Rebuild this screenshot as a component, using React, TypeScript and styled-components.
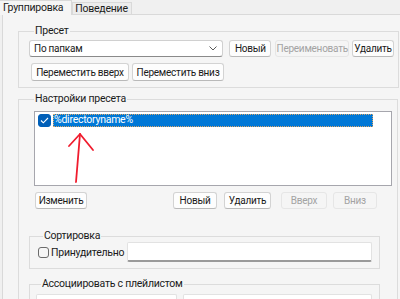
import React from "react";
import styled, { createGlobalStyle } from "styled-components";

const Global = createGlobalStyle`
  html, body {
    margin: 0;
    padding: 0;
    background: #f0f0f0;
  }
  body {
    font-family: Roboto, "Liberation Sans", sans-serif;
    font-size: 10px;
    letter-spacing: -0.25px;
    color: #1a1a1a;
  }
`;

const Window = styled.div`
  width: 400px;
  height: 299px;
  overflow: hidden;
  background: #f0f0f0;
`;

const TabStrip = styled.div`
  display: flex;
  align-items: flex-end;
  height: 14px;
  position: relative;
  z-index: 1;
`;

interface TabProps {
  $active?: boolean;
}

const Tab = styled.div<TabProps>`
  box-sizing: border-box;
  height: ${(p) => (p.$active ? "15px" : "12px")};
  margin-bottom: ${(p) => (p.$active ? "-1px" : "0")};
  padding: ${(p) => (p.$active ? "0 8px 0 3px" : "0 3px 0 2px")};
  background: ${(p) => (p.$active ? "#f5f5f5" : "#ececec")};
  border: 1px solid #d9d9d9;
  border-bottom: none;
  border-left: ${(p) => (p.$active ? "none" : "1px solid #d9d9d9")};
  display: flex;
  align-items: center;
  line-height: 12px;
  font-size: 10.5px;
  white-space: nowrap;
`;

const TabPage = styled.div`
  width: 410px;
  margin-left: 2px;
  padding: 10px 0 0 15px;
  background: #f5f5f5;
  border: 1px solid #d9d9d9;
  min-height: 300px;
  box-sizing: border-box;
`;

interface GroupProps {
  $width: number;
  $pad: string;
  $mt: number;
}

const Group = styled.fieldset<GroupProps>`
  box-sizing: border-box;
  width: ${(p) => p.$width}px;
  margin: ${(p) => p.$mt}px 0 0 0;
  padding: ${(p) => p.$pad};
  border: 1px solid #dcdcdc;
  min-width: 0;
`;

const Legend = styled.legend`
  margin-left: 5px;
  padding: 0 1px;
  line-height: 12px;
  font-size: 10.5px;
  color: #1a1a1a;
`;

interface RowProps {
  $gap?: number;
  $mt?: number;
  $ml?: number;
}

const Row = styled.div<RowProps>`
  display: flex;
  align-items: center;
  gap: ${(p) => p.$gap ?? 0}px;
  margin-top: ${(p) => p.$mt ?? 0}px;
  margin-left: ${(p) => p.$ml ?? 0}px;
`;

interface ButtonProps {
  $w: number;
  $h?: number;
  $ml?: number;
}

const Button = styled.button<ButtonProps>`
  box-sizing: border-box;
  width: ${(p) => p.$w}px;
  height: ${(p) => p.$h ?? 17}px;
  margin-left: ${(p) => p.$ml ?? 0}px;
  padding: 0;
  font-family: inherit;
  font-size: 10px;
  letter-spacing: -0.25px;
  color: #1a1a1a;
  background: #fdfdfd;
  border: 1px solid #d3d3d3;
  border-bottom-color: #b9b9b9;
  border-radius: 3px;
  white-space: nowrap;

  &:disabled {
    color: #a3a3a3;
    background: #f5f5f5;
    border-color: #e6e6e6;
  }
`;

const Combo = styled.div`
  box-sizing: border-box;
  width: 195px;
  height: 17px;
  display: flex;
  align-items: center;
  justify-content: space-between;
  padding: 0 5px 0 4px;
  background: #ffffff;
  border: 1px solid #d0d0d0;
  border-bottom-color: #8a8a8a;
  border-radius: 3px;
`;

const ListBox = styled.div`
  position: relative;
  box-sizing: border-box;
  width: 358px;
  height: 75px;
  margin-left: 5px;
  padding: 2px 3px;
  background: #ffffff;
  border: 1px solid #a6a6ad;
`;

const ListItem = styled.div`
  display: flex;
  align-items: center;
  gap: 2px;
  height: 13px;
`;

const CheckMark = styled.span<{ $checked?: boolean }>`
  box-sizing: border-box;
  width: ${(p) => (p.$checked ? 13 : 11)}px;
  height: ${(p) => (p.$checked ? 13 : 11)}px;
  flex: none;
  display: flex;
  align-items: center;
  justify-content: center;
  border-radius: 3px;
  background: ${(p) => (p.$checked ? "#005fb8" : "#f6f6f6")};
  border: 1px solid ${(p) => (p.$checked ? "#005fb8" : "#6b6b6b")};
`;

const SelectedLabel = styled.span`
  box-sizing: border-box;
  width: 320px;
  height: 13px;
  line-height: 12px;
  padding-left: 1px;
  font-size: 10.5px;
  background: #0078d7;
  color: #ffffff;
  outline: 1px dotted #d9a56a;
  outline-offset: -1px;
`;

const Arrow = styled.svg`
  position: absolute;
  left: 0;
  top: 0;
  overflow: visible;
  pointer-events: none;
`;

const Spacer = styled.div`
  flex: 1;
`;

const CheckLabel = styled.label`
  display: flex;
  align-items: center;
  gap: 2px;
  width: 89px;
  font-size: 10.5px;
  white-space: nowrap;
`;

interface InputProps {
  $w: number;
}

const TextInput = styled.div<InputProps>`
  box-sizing: border-box;
  width: ${(p) => p.$w}px;
  height: 20px;
  background: #ffffff;
  border: 1px solid #e2e2e2;
  border-bottom: 2px solid #9a9a9a;
  border-radius: 2px;
`;

const Chevron = () => (
  <svg width="8" height="5" viewBox="0 0 8 5">
    <polyline points="0.5,0.5 4,4 7.5,0.5" fill="none" stroke="#5a5a5a" strokeWidth="1" />
  </svg>
);

export default function App() {
  return (
    <>
      <Global />
      <Window>
        <TabStrip>
          <Tab $active>Группировка</Tab>
          <Tab>Поведение</Tab>
        </TabStrip>
        <TabPage>
          <Group $width={381} $pad="3px 4px 6px 10px" $mt={0}>
            <Legend>Пресет</Legend>
            <Row>
              <Combo>
                <span>По папкам</span>
                <Chevron />
              </Combo>
              <Button $w={42} $ml={6}>Новый</Button>
              <Button $w={74} $ml={4} disabled>
                Переименовать
              </Button>
              <Button $w={42} $ml={3}>Удалить</Button>
            </Row>
            <Row $gap={3} $mt={6} $ml={2}>
              <Button $w={98} $h={18}>Переместить вверх</Button>
              <Button $w={92} $h={18}>Переместить вниз</Button>
            </Row>
          </Group>

          <Group $width={380} $pad="6px 4px 20px 10px" $mt={5}>
            <Legend>Настройки пресета</Legend>
            <ListBox>
              <ListItem>
                <CheckMark $checked>
                  <svg width="9" height="7" viewBox="0 0 9 7">
                    <polyline points="1,3.5 3.3,5.8 8,1" fill="none" stroke="#ffffff" strokeWidth="1.1" />
                  </svg>
                </CheckMark>
                <SelectedLabel>%directoryname%</SelectedLabel>
              </ListItem>
              <Arrow width="60" height="75">
                <g fill="none" stroke="#f01c2e" strokeWidth="1.8" strokeLinecap="round" strokeLinejoin="round">
                  <line x1="41" y1="70" x2="45" y2="22" />
                  <polyline points="34,34 45,22 58,38" />
                </g>
              </Arrow>
            </ListBox>
            <Row $mt={6} $ml={6} style={{ width: 342 }}>
              <Button $w={52}>Изменить</Button>
              <Spacer />
              <Button $w={44}>Новый</Button>
              <Button $w={47} $ml={7}>Удалить</Button>
              <Button $w={46} $ml={10} disabled>Вверх</Button>
              <Button $w={44} $ml={6} disabled>Вниз</Button>
            </Row>

            <Group $width={351} $pad="0 7px 6px 8px" $mt={21}>
              <Legend>Сортировка</Legend>
              <Row>
                <CheckLabel>
                  <CheckMark />
                  Принудительно
                </CheckLabel>
                <TextInput $w={246} />
              </Row>
            </Group>

            <Group $width={351} $pad="4px 7px 5px 6px" $mt={9}>
              <Legend>Ассоциировать с плейлистом</Legend>
              <Row $gap={6}>
                <TextInput $w={141} />
                <TextInput $w={189} />
              </Row>
            </Group>
          </Group>
        </TabPage>
      </Window>
    </>
  );
}
